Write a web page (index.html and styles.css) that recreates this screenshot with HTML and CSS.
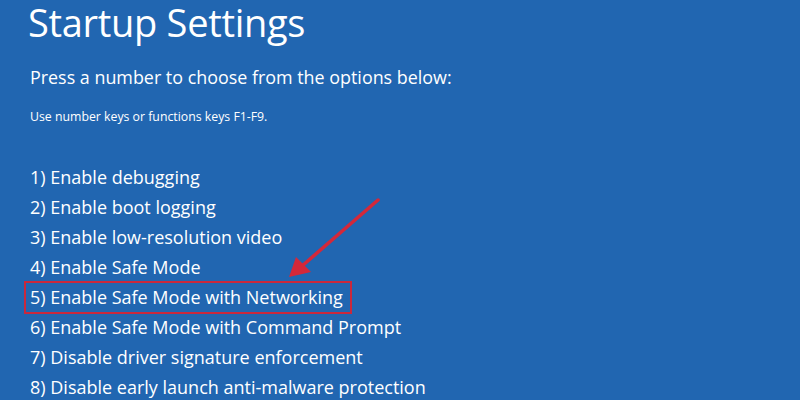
FILE: index.html
```html
<!DOCTYPE html>
<html>
<head>
<meta charset="utf-8">
<link rel="stylesheet" href="styles.css">
</head>
<body>
<main class="screen">
  <h1 class="title">Startup Settings</h1>
  <p class="lead">Press a number to choose from the options below:</p>
  <p class="hint">Use number keys or functions keys F1-F9.</p>
  <ol class="options">
    <li>1) Enable debugging</li>
    <li>2) Enable boot logging</li>
    <li>3) Enable low-resolution video</li>
    <li>4) Enable Safe Mode</li>
    <li class="selected">5) Enable Safe Mode with Networking</li>
    <li>6) Enable Safe Mode with Command Prompt</li>
    <li>7) Disable driver signature enforcement</li>
    <li>8) Disable early launch anti-malware protection</li>
  </ol>
  <svg class="arrow" width="800" height="400" viewBox="0 0 800 400">
    <line x1="378" y1="200" x2="302" y2="266" stroke="#d4283a" stroke-width="3.5" stroke-linecap="round"/>
    <polygon points="289,277 296,257 311,272" fill="#d4283a"/>
  </svg>
</main>
</body>
</html>
```
FILE: styles.css
```css
html, body {
  margin: 0;
  padding: 0;
}
body {
  background: #2166b1;
  font-family: "Open Sans", "Noto Sans", sans-serif;
  color: #ffffff;
}
.screen {
  position: relative;
  width: 800px;
  height: 400px;
  overflow: hidden;
  padding: 0 0 0 28px;
  box-sizing: border-box;
}
.title {
  margin: 0;
  font-weight: 400;
  font-size: 38px;
  line-height: 44px;
  letter-spacing: -0.3px;
}
.lead {
  margin: 21px 0 0 2px;
  font-size: 17.9px;
  line-height: 24px;
}
.hint {
  margin: 20px 0 0 2px;
  font-size: 12.3px;
  line-height: 16px;
}
.options {
  list-style: none;
  margin: 37px 0 0 0;
  padding: 0;
}
.options li {
  font-size: 18px;
  line-height: 30px;
  height: 30px;
  padding-left: 2px;
  box-sizing: border-box;
}
.options li.selected {
  margin-left: -4px;
  padding-left: 4px;
  width: 328px;
  border: 2.5px solid #c9283d;
  line-height: 28px;
  height: 33px;
  margin-top: -1px;
  margin-bottom: -2px;
}
.arrow {
  position: absolute;
  left: 0;
  top: 0;
  pointer-events: none;
}
```
